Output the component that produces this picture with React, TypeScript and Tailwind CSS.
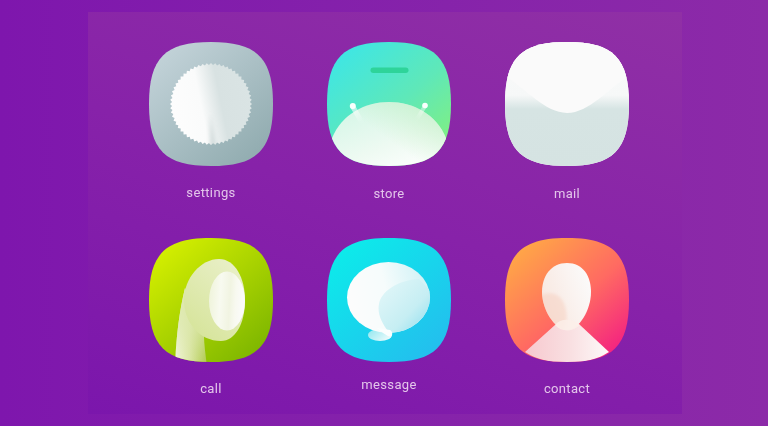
import { FC, ReactNode } from "react";

const SQUIRCLE =
  "M62 0C108 0 124 16 124 62C124 108 108 124 62 124C16 124 0 108 0 62C0 16 16 0 62 0Z";

const gearPoints = () => {
  const teeth = 60;
  const points: string[] = [];
  for (let i = 0; i < teeth * 2; i++) {
    const r = i % 2 === 0 ? 41 : 39;
    const a = (i * Math.PI) / teeth;
    points.push(`${(62 + r * Math.cos(a)).toFixed(2)},${(62 + r * Math.sin(a)).toFixed(2)}`);
  }
  return points.join(" ");
};

type IconBaseProps = { id: string; from: string; to: string; via?: string; children: ReactNode; defs?: ReactNode };

const IconBase: FC<IconBaseProps> = ({ id, from, via, to, children, defs }) => (
  <svg width="124" height="124" viewBox="0 0 124 124" className="block blur-[0.4px]">
    <defs>
      <clipPath id={`${id}-clip`}>
        <path d={SQUIRCLE} />
      </clipPath>
      <linearGradient id={`${id}-bg`} x1="0.1" y1="0.05" x2="0.9" y2="0.95">
        <stop offset="0" stopColor={from} />
        {via && <stop offset="0.55" stopColor={via} />}
        <stop offset="1" stopColor={to} />
      </linearGradient>
      {defs}
    </defs>
    <g clipPath={`url(#${id}-clip)`}>
      <rect width="124" height="124" fill={`url(#${id}-bg)`} />
      {children}
    </g>
  </svg>
);

const SettingsIcon = () => (
  <IconBase
    id="settings"
    from="#c3d3d9"
    to="#90abaf"
    defs={
      <>
        <linearGradient id="gear" x1="0" y1="0.6" x2="1" y2="0.4">
          <stop offset="0" stopColor="#fdfdfd" />
          <stop offset="0.38" stopColor="#fafbfb" />
          <stop offset="0.52" stopColor="#e6ecec" />
          <stop offset="0.62" stopColor="#d8e2e2" />
          <stop offset="1" stopColor="#dae4e4" />
        </linearGradient>
        <clipPath id="gearClip">
          <polygon points={gearPoints()} />
        </clipPath>
        <filter id="gearBlur" x="-80%" y="-50%" width="260%" height="200%">
          <feGaussianBlur stdDeviation="2" />
        </filter>
      </>
    }
  >
    <polygon points={gearPoints()} fill="url(#gear)" />
    <g clipPath="url(#gearClip)">
      <path d="M61 72L68 108H61Z" fill="#bccaca" fillOpacity="0.6" filter="url(#gearBlur)" />
    </g>
  </IconBase>
);

const StoreIcon = () => (
  <IconBase
    id="store"
    from="#3de6e6"
    via="#5fe8b8"
    to="#84f07c"
    defs={
      <>
        <linearGradient id="dome" x1="0.05" y1="0.1" x2="0.75" y2="1">
          <stop offset="0" stopColor="#d2f6e6" />
          <stop offset="0.6" stopColor="#eefaf2" />
          <stop offset="1" stopColor="#ffffff" />
        </linearGradient>
        <linearGradient id="domeShade" x1="0.5" y1="0.55" x2="1" y2="0.2">
          <stop offset="0" stopColor="#bdeec0" stopOpacity="0" />
          <stop offset="1" stopColor="#bdeec0" stopOpacity="0.75" />
        </linearGradient>
        <linearGradient id="antLeft" gradientUnits="userSpaceOnUse" x1="26" y1="65" x2="34" y2="79">
          <stop offset="0" stopColor="#ffffff" stopOpacity="0.7" />
          <stop offset="1" stopColor="#ffffff" stopOpacity="0.05" />
        </linearGradient>
        <linearGradient id="antRight" gradientUnits="userSpaceOnUse" x1="98" y1="64" x2="90" y2="77">
          <stop offset="0" stopColor="#ffffff" stopOpacity="0.55" />
          <stop offset="1" stopColor="#ffffff" stopOpacity="0.02" />
        </linearGradient>
      </>
    }
  >
    <rect x="43.5" y="25.5" width="38" height="5.5" rx="2.75" fill="#2ed49a" />
    <path d="M5 96C15 72 38 60 62 60C86 60 109 72 119 96L130 130H-6Z" fill="url(#dome)" />
    <path d="M5 96C15 72 38 60 62 60C86 60 109 72 119 96L130 130H-6Z" fill="url(#domeShade)" />
    <path d="M26 65L34 79" stroke="url(#antLeft)" strokeWidth="5" strokeLinecap="round" />
    <path d="M98 64L90 77" stroke="url(#antRight)" strokeWidth="4" strokeLinecap="round" />
    <circle cx="25.8" cy="64" r="3" fill="#fbfffd" />
    <circle cx="98" cy="63.5" r="2.8" fill="#fbfffd" />
  </IconBase>
);

const MailIcon = () => (
  <IconBase
    id="mail"
    from="#ffffff"
    to="#ffffff"
    defs={
      <linearGradient id="mailBody" x1="0" y1="0" x2="0" y2="1">
        <stop offset="0" stopColor="#fafafa" />
        <stop offset="0.43" stopColor="#f6f8f8" />
        <stop offset="0.54" stopColor="#d6e4e3" />
        <stop offset="1" stopColor="#d5e3e2" />
      </linearGradient>
    }
  >
    <rect width="124" height="124" fill="url(#mailBody)" />
    <path d="M0 0H124V34C104 46 84 71 62 71C40 71 20 46 0 34Z" fill="#fafafa" />
  </IconBase>
);

const CallIcon = () => (
  <IconBase
    id="call"
    from="#d6f000"
    to="#7cb500"
    defs={
      <>
        <linearGradient id="stem" x1="0" y1="0" x2="1" y2="0">
          <stop offset="0" stopColor="#f4f8e0" />
          <stop offset="0.45" stopColor="#dbe6a6" />
          <stop offset="1" stopColor="#a9c640" />
        </linearGradient>
        <linearGradient id="stemFade" x1="0" y1="0" x2="0" y2="1">
          <stop offset="0" stopColor="#dde8ae" />
          <stop offset="0.45" stopColor="#dde8ae" stopOpacity="0.75" />
          <stop offset="1" stopColor="#dde8ae" stopOpacity="0" />
        </linearGradient>
        <linearGradient id="earOuter" x1="0.1" y1="0.9" x2="0.7" y2="0">
          <stop offset="0" stopColor="#d6e49a" />
          <stop offset="1" stopColor="#e8efc6" />
        </linearGradient>
        <linearGradient id="earInner" x1="0" y1="0" x2="1" y2="0.1">
          <stop offset="0" stopColor="#eef3d8" />
          <stop offset="0.35" stopColor="#f8faf0" />
          <stop offset="0.62" stopColor="#f1f4e2" />
          <stop offset="0.78" stopColor="#f8f9f0" />
          <stop offset="1" stopColor="#fbfbfb" />
        </linearGradient>
      </>
    }
  >
    <path d="M36 50C30 75 27 100 26 130H58C57 118 55 108 55 98Z" fill="url(#stem)" />
    <path d="M36 50C30 75 27 100 26 130H58C57 118 55 108 55 98Z" fill="url(#stemFade)" />
    <path d="M70 21C86 21 96 40 96 62C96 86 86 103 72 103C50 103 35 84 35 62C35 40 52 21 70 21Z" fill="url(#earOuter)" />
    <ellipse cx="78" cy="63" rx="18" ry="29.5" fill="url(#earInner)" />
  </IconBase>
);

const MessageIcon = () => (
  <IconBase
    id="message"
    from="#0cecea"
    to="#24bdee"
    defs={
      <>
        <linearGradient id="bubble" x1="0" y1="0.4" x2="1" y2="0.2">
          <stop offset="0" stopColor="#fcfcfc" />
          <stop offset="0.45" stopColor="#f6fcfc" />
          <stop offset="1" stopColor="#cdf1f5" />
        </linearGradient>
        <linearGradient id="bubbleShade" x1="0.05" y1="0.15" x2="0.9" y2="0.95">
          <stop offset="0" stopColor="#e0f6f8" />
          <stop offset="0.55" stopColor="#c6eef3" />
          <stop offset="1" stopColor="#86dcee" />
        </linearGradient>
        <linearGradient id="bubbleTail" x1="0" y1="0" x2="1" y2="0.6">
          <stop offset="0" stopColor="#8ee6ef" />
          <stop offset="1" stopColor="#e8fafb" />
        </linearGradient>
        <clipPath id="bubbleClip">
          <ellipse cx="61.5" cy="59.5" rx="41.5" ry="35.5" />
        </clipPath>
      </>
    }
  >
    <ellipse cx="53" cy="97" rx="12" ry="6" fill="url(#bubbleTail)" />
    <ellipse cx="61.5" cy="59.5" rx="41.5" ry="35.5" fill="url(#bubble)" />
    <g clipPath="url(#bubbleClip)">
      <path d="M64 97C55 86 50 76 52 66C54 54 70 42 92 41L110 60V100Z" fill="url(#bubbleShade)" />
    </g>
    <path d="M50 90L63 92C66 94 66 98 63 98.5C60 98.5 55 94 50 90Z" fill="#fbfefe" />
  </IconBase>
);

const ContactIcon = () => (
  <IconBase
    id="contact"
    from="#ffaa45"
    via="#ff6a62"
    to="#f31f82"
    defs={
      <>
        <linearGradient id="head" x1="0" y1="0.7" x2="1" y2="0.2">
          <stop offset="0" stopColor="#f8e6de" />
          <stop offset="0.6" stopColor="#faf3f0" />
          <stop offset="1" stopColor="#fbfbfb" />
        </linearGradient>
        <linearGradient id="body" x1="0" y1="0.5" x2="1" y2="0.5">
          <stop offset="0" stopColor="#f7c8ce" />
          <stop offset="0.55" stopColor="#f9e0e2" />
          <stop offset="1" stopColor="#fdf9f9" />
        </linearGradient>
        <clipPath id="headClip">
          <path d="M62 25C78 25 86 38 86 54C86 72 74 92 62 92C50 92 37 72 37 54C37 38 46 25 62 25Z" />
        </clipPath>
        <filter id="headBlur" x="-30%" y="-30%" width="160%" height="160%">
          <feGaussianBlur stdDeviation="1.8" />
        </filter>
      </>
    }
  >
    <path d="M20 114L50 87C58 82 68 82 75 87L104 114C95 120 80 125 62 125C44 125 29 120 20 114Z" fill="url(#body)" />
    <path d="M62 25C78 25 86 38 86 54C86 72 74 92 62 92C50 92 37 72 37 54C37 38 46 25 62 25Z" fill="url(#head)" />
    <g clipPath="url(#headClip)">
      <path d="M32 60C42 52 56 54 60 68C63 78 62 88 56 96L34 92Z" fill="#f6c8b4" fillOpacity="0.42" filter="url(#headBlur)" />
    </g>
    <path d="M50 87C55 80 68 80 75 87C71 91 66 92.5 62 92.5C57 92.5 53 90 50 87Z" fill="#fcefe9" fillOpacity="0.85" />
  </IconBase>
);

type AppTileProps = { icon: ReactNode; label: string; labelClass: string };

const AppTile: FC<AppTileProps> = ({ icon, label, labelClass }) => (
  <div className="flex flex-col items-center">
    {icon}
    <span className={`text-[13px] leading-4 tracking-[0.35px] text-[#e3c5ea] font-['Roboto',sans-serif] blur-[0.3px] ${labelClass}`}>
      {label}
    </span>
  </div>
);

const App: FC = () => {
  return (
    <div className="h-[426px] w-[768px] overflow-hidden bg-gradient-to-r from-[#7e16ad] to-[#8c2aa8] pt-3 pl-[88px]">
      <div className="grid h-[402px] w-[594px] grid-cols-[178px_178px_178px] grid-rows-[196px_172px] bg-[linear-gradient(20deg,#7b16ac_0%,#8722a9_50%,#9030a5_100%)] pt-[30px] pl-[34px]">
        <AppTile icon={<SettingsIcon />} label="settings" labelClass="mt-[19px]" />
        <AppTile icon={<StoreIcon />} label="store" labelClass="mt-[20px]" />
        <AppTile icon={<MailIcon />} label="mail" labelClass="mt-[20px]" />
        <AppTile icon={<CallIcon />} label="call" labelClass="mt-[19px]" />
        <AppTile icon={<MessageIcon />} label="message" labelClass="mt-[15px]" />
        <AppTile icon={<ContactIcon />} label="contact" labelClass="mt-[19px]" />
      </div>
    </div>
  );
};

export default App;
